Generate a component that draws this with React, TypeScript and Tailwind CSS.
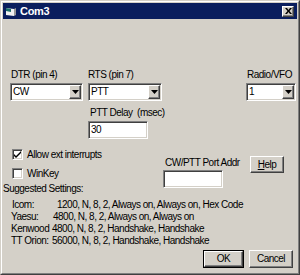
import React from "react";

const sunken =
  "border border-t-[#808080] border-l-[#808080] border-r-white border-b-white shadow-[inset_1px_1px_0_#404040,inset_-1px_-1px_0_#d4d0c8]";
const raised =
  "border border-t-white border-l-white border-r-[#404040] border-b-[#404040] shadow-[inset_-1px_-1px_0_#808080]";

function Arrow() {
  return (
    <svg width="7" height="4" viewBox="0 0 7 4">
      <path d="M0 0h7L3.5 4z" fill="#000" />
    </svg>
  );
}

function Combo({ value, width }: { value: string; width: string }) {
  return (
    <div className={`flex h-[18px] items-stretch bg-white p-px ${sunken} ${width}`}>
      <span className="flex-1 pl-px leading-[14px]">{value}</span>
      <div className={`flex w-[12px] items-center justify-center bg-[#d4d0c8] ${raised}`}>
        <Arrow />
      </div>
    </div>
  );
}

function Check({ label, checked }: { label: string; checked?: boolean }) {
  return (
    <div className="flex h-[13px] items-center gap-[4px]">
      <div className={`flex size-[11px] items-center justify-center bg-white ${sunken}`}>
        {checked && (
          <svg width="7" height="7" viewBox="0 0 7 7">
            <path d="M0 3l2 2 5-5v2L2 7 0 5z" fill="#000" />
          </svg>
        )}
      </div>
      <span>{label}</span>
    </div>
  );
}

const rates = [
  { name: "Icom:", w: "w-[46px]", pl: "pl-px", text: "1200, N, 8, 2, Always on, Always on, Hex Code" },
  { name: "Yaesu:", w: "w-[42px]", pl: "", text: "4800, N, 8, 2, Always on, Always on" },
  { name: "Kenwood", w: "w-[41px]", pl: "", text: "4800, N, 8, 2, Handshake, Handshake" },
  { name: "TT Orion:", w: "w-[41px]", pl: "", text: "56000, N, 8, 2, Handshake, Handshake" },
];

export default function App() {
  return (
    <div className="h-[275px] w-[300px] border border-t-[#d4d0c8] border-l-[#d4d0c8] border-r-[#404040] border-b-[#404040] bg-[#d4d0c8] font-['Liberation_Sans',Arial,sans-serif] text-[10px] leading-[12px] tracking-[-0.5px] text-black">
      <div className="flex h-full flex-col border border-t-white border-l-white border-r-[#808080] border-b-[#808080] p-px">
        {/* title bar */}
        <div className="flex h-[16px] items-center bg-[#0a1e5e] pl-[2px] pr-[3px]">
          <svg width="12" height="11" viewBox="0 0 12 11" className="mr-[3px]">
            <path d="M1 2l8 1v7L1 9z" fill="#f2f2f2" />
            <path d="M1 2l5 1v3L1 5z" fill="#1c6e6a" />
            <path d="M9 3l2-1v7l-2 1z" fill="#9a9a9a" />
          </svg>
          <span className="text-[11px] font-bold tracking-[-0.3px] text-white">Com3</span>
          <div className={`ml-auto flex h-[11px] w-[12px] items-center justify-center bg-[#d4d0c8] ${raised}`}>
            <svg width="7" height="6" viewBox="0 0 7 6">
              <path d="M0 0h2l1.5 2L5 0h2L4.5 3 7 6H5L3.5 4 2 6H0l2.5-3z" fill="#000" />
            </svg>
          </div>
        </div>

        <div className="flex flex-1 flex-col pt-[50px]">
          {/* combos */}
          <div className="flex pl-[7px] pr-px">
            <div className="w-[73px]">
              <div className="pl-px">DTR (pin 4)</div>
              <div className="mt-[2px]">
                <Combo value="CW" width="w-[73px]" />
              </div>
            </div>
            <div className="ml-[5px] w-[74px]">
              <div>RTS (pin 7)</div>
              <div className="mt-[2px]">
                <Combo value="PTT" width="w-[74px]" />
              </div>
            </div>
            <div className="ml-auto w-[50px]">
              <div className="pl-px">Radio/VFO</div>
              <div className="mt-[2px]">
                <Combo value="1" width="w-[50px]" />
              </div>
            </div>
          </div>

          {/* ptt delay */}
          <div className="mt-[6px] pl-[85px]">
            <div className="whitespace-pre pl-[2px]">PTT Delay  (msec)</div>
            <div className={`mt-[2px] h-[18px] w-[60px] bg-white p-px pl-[2px] leading-[14px] ${sunken}`}>30</div>
          </div>

          {/* options */}
          <div className="mt-[9px] flex items-start">
            <div className="w-[160px]">
              <div className="pl-[9px]">
                <Check label="Allow ext interrupts" checked />
                <div className="mt-[6px]">
                  <Check label="WinKey" />
                </div>
              </div>
              <div className="mt-[3px]">Suggested Settings:</div>
            </div>
            <div className="mt-[9px] w-[87px]">
              <div className="whitespace-nowrap pl-[2px]">CW/PTT Port Addr</div>
              <div className={`mt-px h-[18px] w-[60px] bg-white ${sunken}`} />
            </div>
            <button
              type="button"
              className={`mt-[8px] h-[17px] w-[34px] bg-[#d4d0c8] leading-[13px] ${raised}`}
            >
              <span className="underline">H</span>elp
            </button>
          </div>

          {/* table */}
          <div className="mt-[4px] pl-[8px]">
            {rates.map((r) => (
              <div key={r.name} className="flex whitespace-nowrap">
                <span className={`${r.w} ${r.pl} shrink-0`}>{r.name}</span>
                <span>{r.text}</span>
              </div>
            ))}
          </div>

          {/* buttons */}
          <div className="mt-[3px] flex justify-end gap-[5px] pr-[4px]">
            <div className="border border-black">
              <button type="button" className={`h-[16px] w-[39px] bg-[#d4d0c8] leading-[12px] ${raised}`}>
                OK
              </button>
            </div>
            <button type="button" className={`h-[18px] w-[44px] bg-[#d4d0c8] leading-[14px] ${raised}`}>
              Cancel
            </button>
          </div>
        </div>
      </div>
    </div>
  );
}
